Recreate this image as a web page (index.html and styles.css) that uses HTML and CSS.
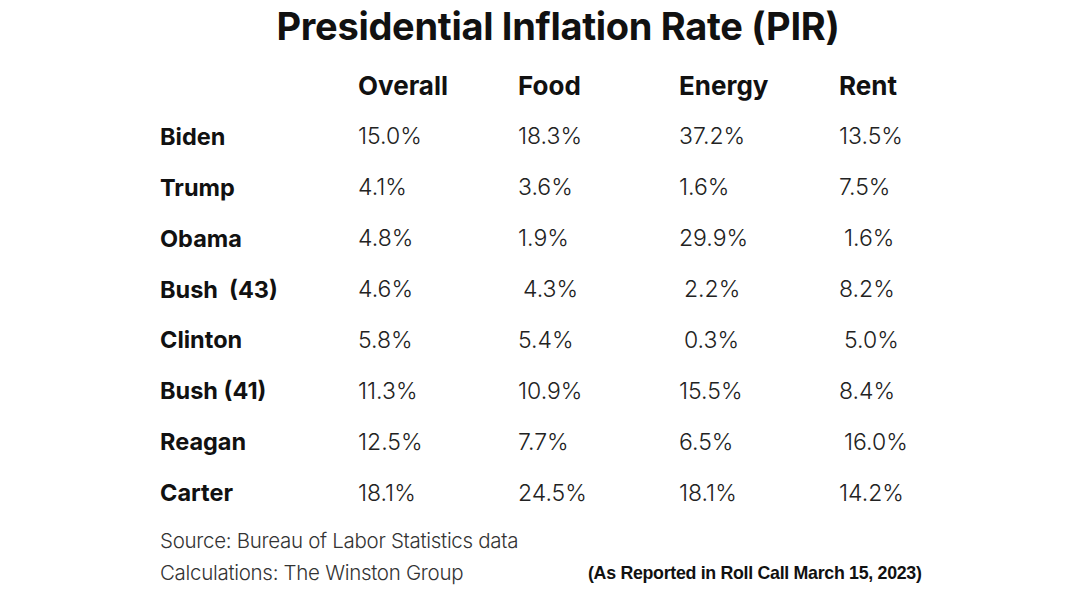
FILE: index.html
```html
<!DOCTYPE html>
<html>
<head>
<meta charset="utf-8">
<link rel="stylesheet" href="styles.css">
</head>
<body>
<div class="page">
  <h1 class="title">Presidential Inflation Rate (PIR)</h1>
  <div class="table">
    <div class="row head">
      <span class="name"></span>
      <span>Overall</span><span>Food</span><span>Energy</span><span>Rent</span>
    </div>
    <div class="row"><span class="name">Biden</span><span>15.0%</span><span>18.3%</span><span>37.2%</span><span>13.5%</span></div>
    <div class="row"><span class="name">Trump</span><span>4.1%</span><span>3.6%</span><span>1.6%</span><span>7.5%</span></div>
    <div class="row"><span class="name">Obama</span><span>4.8%</span><span>1.9%</span><span>29.9%</span><span class="ind">1.6%</span></div>
    <div class="row"><span class="name">Bush&nbsp; (43)</span><span>4.6%</span><span class="ind">4.3%</span><span class="ind">2.2%</span><span>8.2%</span></div>
    <div class="row"><span class="name">Clinton</span><span>5.8%</span><span>5.4%</span><span class="ind">0.3%</span><span class="ind">5.0%</span></div>
    <div class="row"><span class="name">Bush (41)</span><span>11.3%</span><span>10.9%</span><span>15.5%</span><span>8.4%</span></div>
    <div class="row"><span class="name">Reagan</span><span>12.5%</span><span>7.7%</span><span>6.5%</span><span class="ind">16.0%</span></div>
    <div class="row"><span class="name">Carter</span><span>18.1%</span><span>24.5%</span><span>18.1%</span><span>14.2%</span></div>
  </div>
  <div class="footer">
    <div class="notes">
      <div>Source: Bureau of Labor Statistics data</div>
      <div>Calculations: The Winston Group</div>
    </div>
    <div class="reported">(As Reported in Roll Call March 15, 2023)</div>
  </div>
</div>
</body>
</html>
```
FILE: styles.css
```css
html, body {
  margin: 0;
  padding: 0;
  background: #ffffff;
}
.page {
  width: 1068px;
  height: 601px;
  color: #1a1a1a;
  font-family: "Inter", "Liberation Sans", sans-serif;
}
.title {
  margin: 0;
  padding-top: 4px;
  padding-left: 48px;
  text-align: center;
  font-size: 38px;
  line-height: 44px;
  font-weight: 700;
  letter-spacing: -0.3px;
  color: #111;
}
.table {
  padding-left: 160px;
  margin-top: 12px;
}
.row {
  display: grid;
  grid-template-columns: 198px 160px 161px 160px 160px;
  height: 50.9px;
  align-items: center;
  font-size: 23px;
  font-weight: 300;
  color: #222;
}
.row .name {
  font-weight: 700;
  font-size: 23.5px;
  color: #111;
}
.row.head span {
  font-weight: 700;
  font-size: 26px;
  color: #111;
}
.ind {
  padding-left: 5px;
}
.footer {
  display: flex;
  align-items: flex-end;
  padding-left: 160px;
  margin-top: 7px;
}
.notes {
  width: 428px;
  font-family: "Inter", "Liberation Sans", sans-serif;
  font-weight: 300;
  font-size: 20.5px;
  line-height: 32px;
  letter-spacing: -0.3px;
  color: #333;
}
.reported {
  font-family: "Liberation Sans", sans-serif;
  font-weight: 700;
  font-size: 17.8px;
  line-height: 32px;
  letter-spacing: -0.3px;
  color: #111;
}
```
